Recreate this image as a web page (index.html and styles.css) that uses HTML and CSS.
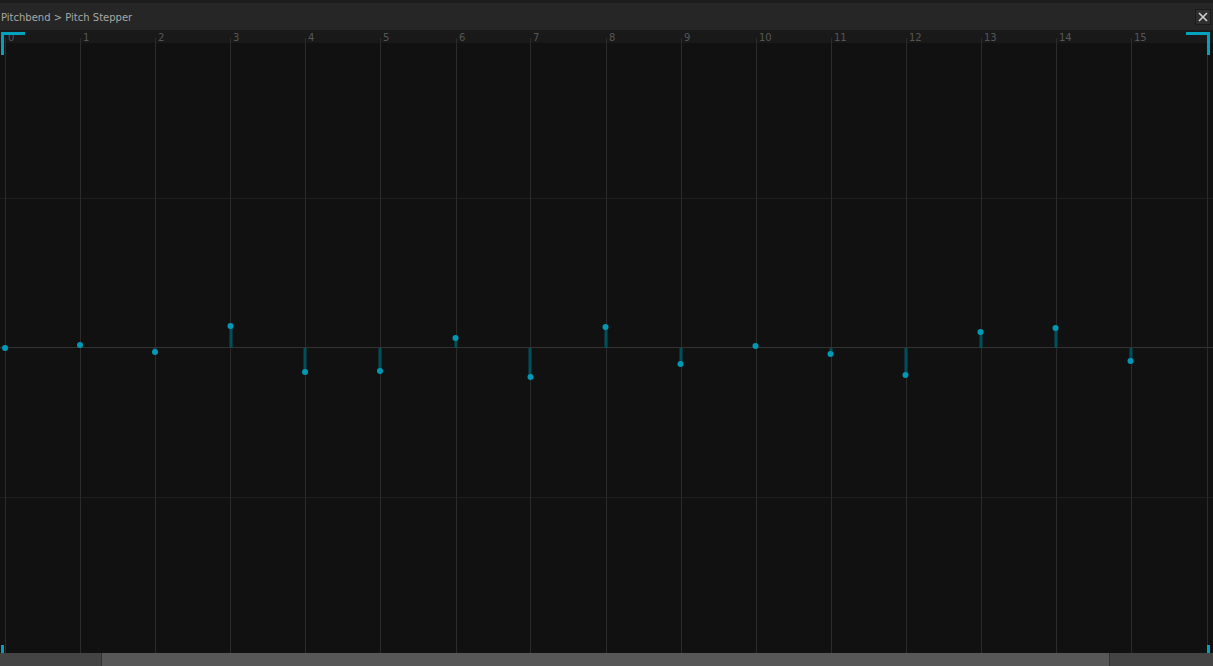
FILE: index.html
```html
<!DOCTYPE html>
<html>
<head>
<meta charset="utf-8">
<link rel="stylesheet" href="styles.css">
</head>
<body>
<div class="window">
  <div class="titlebar">
    <span class="title">Pitchbend &gt; Pitch Stepper</span>
    <button class="close" aria-label="Close">
      <svg width="10" height="10" viewBox="0 0 10 10"><path d="M1 1L9 9M9 1L1 9" stroke="#d0d0d0" stroke-width="1.6"/></svg>
    </button>
  </div>
  <div class="canvas">
    <svg class="graph" width="1213" height="621" viewBox="0 0 1213 621">
      <rect x="0" y="0" width="1213" height="11" fill="#191919"/>
      <rect x="0" y="11" width="1213" height="610" fill="#111111"/>
      <g stroke="#1e1e1e" stroke-width="1">
        <line x1="0" y1="166.5" x2="1213" y2="166.5"/>
        <line x1="0" y1="465.5" x2="1213" y2="465.5"/>
      </g>
      <g stroke="#2b2b2b" stroke-width="1">
        <line x1="5.5" y1="6" x2="5.5" y2="621"/>
        <line x1="80.5" y1="6" x2="80.5" y2="621"/>
        <line x1="155.5" y1="6" x2="155.5" y2="621"/>
        <line x1="230.5" y1="6" x2="230.5" y2="621"/>
        <line x1="305.5" y1="6" x2="305.5" y2="621"/>
        <line x1="380.5" y1="6" x2="380.5" y2="621"/>
        <line x1="456.5" y1="6" x2="456.5" y2="621"/>
        <line x1="530.5" y1="6" x2="530.5" y2="621"/>
        <line x1="606.5" y1="6" x2="606.5" y2="621"/>
        <line x1="681.5" y1="6" x2="681.5" y2="621"/>
        <line x1="756.5" y1="6" x2="756.5" y2="621"/>
        <line x1="831.5" y1="6" x2="831.5" y2="621"/>
        <line x1="906.5" y1="6" x2="906.5" y2="621"/>
        <line x1="981.5" y1="6" x2="981.5" y2="621"/>
        <line x1="1056.5" y1="6" x2="1056.5" y2="621"/>
        <line x1="1131.5" y1="6" x2="1131.5" y2="621"/>
        <line x1="1207.5" y1="6" x2="1207.5" y2="621"/>
      </g>
      <line x1="0" y1="315.5" x2="1213" y2="315.5" stroke="#333333" stroke-width="1"/>
      <g class="labels" fill="#565656">
        <text x="8" y="9">0</text>
        <text x="83" y="9">1</text>
        <text x="158" y="9">2</text>
        <text x="233" y="9">3</text>
        <text x="308" y="9">4</text>
        <text x="383" y="9">5</text>
        <text x="459" y="9">6</text>
        <text x="533" y="9">7</text>
        <text x="609" y="9">8</text>
        <text x="684" y="9">9</text>
        <text x="759" y="9">10</text>
        <text x="834" y="9">11</text>
        <text x="909" y="9">12</text>
        <text x="984" y="9">13</text>
        <text x="1059" y="9">14</text>
        <text x="1134" y="9">15</text>
      </g>
      <g stroke="#00505c" stroke-width="3">
        <line x1="5" y1="316" x2="5" y2="316"/>
        <line x1="80" y1="316" x2="80" y2="313"/>
        <line x1="155" y1="316" x2="155" y2="320"/>
        <line x1="231" y1="316" x2="231" y2="294"/>
        <line x1="305" y1="316" x2="305" y2="340"/>
        <line x1="380" y1="316" x2="380" y2="339"/>
        <line x1="456" y1="316" x2="456" y2="306"/>
        <line x1="530" y1="316" x2="530" y2="345"/>
        <line x1="606" y1="316" x2="606" y2="295"/>
        <line x1="681" y1="316" x2="681" y2="332"/>
        <line x1="756" y1="316" x2="756" y2="314"/>
        <line x1="831" y1="316" x2="831" y2="322"/>
        <line x1="906" y1="316" x2="906" y2="343"/>
        <line x1="981" y1="316" x2="981" y2="300"/>
        <line x1="1056" y1="316" x2="1056" y2="296"/>
        <line x1="1131" y1="316" x2="1131" y2="329"/>
      </g>
      <g fill="#0099b5">
        <circle cx="5" cy="316" r="3"/>
        <circle cx="80" cy="313" r="3"/>
        <circle cx="155" cy="320" r="3"/>
        <circle cx="230.5" cy="294" r="3"/>
        <circle cx="305" cy="340" r="3"/>
        <circle cx="380" cy="339" r="3"/>
        <circle cx="455.5" cy="306" r="3"/>
        <circle cx="530.5" cy="345" r="3"/>
        <circle cx="605.5" cy="295" r="3"/>
        <circle cx="680.5" cy="332" r="3"/>
        <circle cx="755.5" cy="314" r="3"/>
        <circle cx="830.5" cy="322" r="3"/>
        <circle cx="905.5" cy="343" r="3"/>
        <circle cx="980.5" cy="300" r="3"/>
        <circle cx="1055.5" cy="296" r="3"/>
        <circle cx="1130.5" cy="329" r="3"/>
      </g>
    </svg>
    <span class="corner tl"></span>
    <span class="corner tr"></span>
    <span class="corner bl"></span>
    <span class="corner br"></span>
  </div>
  <div class="scrollbar">
    <div class="track-left"></div>
    <div class="thumb"></div>
    <div class="track-right"></div>
  </div>
</div>
</body>
</html>
```
FILE: styles.css
```css
html, body {
  margin: 0;
  padding: 0;
  background: #111111;
}
.window {
  width: 1213px;
  height: 666px;
  display: flex;
  flex-direction: column;
  overflow: hidden;
  position: relative;
}
.titlebar {
  height: 27px;
  border-top: 3px solid #1c1c1c;
  border-bottom: 2px solid #1a1a1a;
  background: #262626;
  display: flex;
  align-items: center;
  justify-content: space-between;
  padding: 0 2px 0 1px;
  flex: none;
}
.title {
  font-family: "DejaVu Sans", sans-serif;
  font-size: 10px;
  color: #a6a6a6;
  padding-top: 1px;
}
.close {
  width: 16px;
  height: 16px;
  padding: 0;
  margin: 0;
  border: 1px solid #1b1b1b;
  background: #2f2f2f;
  display: flex;
  align-items: center;
  justify-content: center;
  margin-top: 0px;
}
.canvas {
  flex: 1;
  position: relative;
  overflow: hidden;
}
.graph {
  display: block;
}
.labels text {
  font-family: "DejaVu Sans", sans-serif;
  font-size: 10px;
}
.corner {
  position: absolute;
  width: 24px;
  height: 23px;
  border-color: #00a3bd;
  border-style: solid;
  border-width: 0;
  box-sizing: border-box;
}
.corner.tl { left: 1px; top: 0; border-top-width: 3px; border-left-width: 3px; }
.corner.tr { right: 3px; top: 0; border-top-width: 3px; border-right-width: 3px; }
.corner.bl { left: 1px; bottom: -13px; height: 21px; border-bottom-width: 2px; border-left-width: 3px; }
.corner.br { right: 3px; bottom: -13px; height: 21px; border-bottom-width: 2px; border-right-width: 3px; }
.scrollbar {
  height: 13px;
  flex: none;
  display: flex;
  background: #434343;
}
.track-left {
  width: 101px;
  background: #444444;
  border-right: 1px solid #333333;
}
.thumb {
  flex: 1;
  background: #575757;
}
.track-right {
  width: 103px;
  background: #444444;
  border-left: 1px solid #333333;
}
```
